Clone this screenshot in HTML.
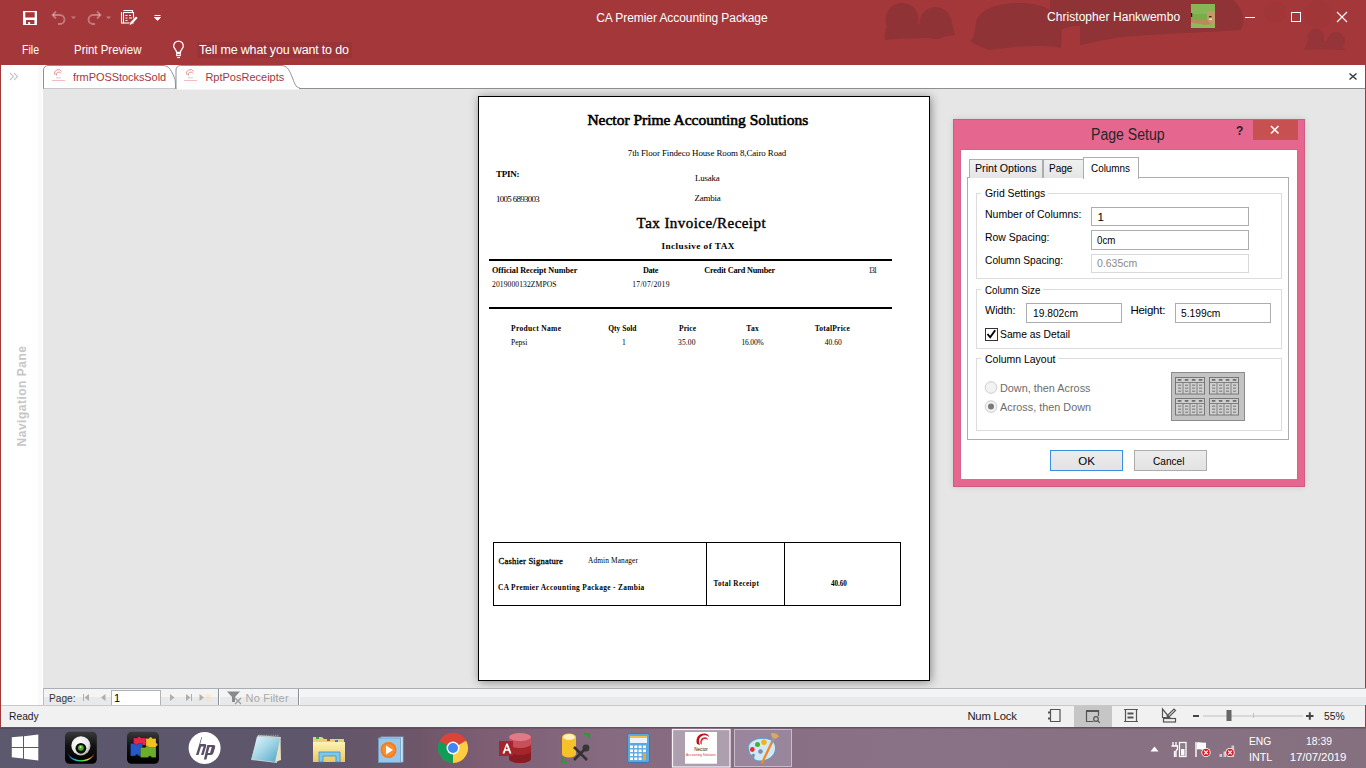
<!DOCTYPE html>
<html><head><meta charset="utf-8">
<style>
*{margin:0;padding:0;box-sizing:border-box}
html,body{width:1366px;height:768px;overflow:hidden;background:#e6e6e6;font-family:"Liberation Sans",sans-serif}
.a{position:absolute}
.t{position:absolute;white-space:nowrap;line-height:1}
svg{position:absolute;overflow:visible}
</style></head><body>
<div class="a" style="left:0;top:0;width:1366px;height:65px;background:#a4373a;overflow:hidden"><svg style="left:0;top:0" width="1366" height="65">
<g fill="#8f3337">
<circle cx="902" cy="19.5" r="16.5"/><circle cx="935.5" cy="23" r="16"/>
<path d="M886 28 C885 34 884 38 885.5 40 C905 37 930 40 955 35 L952 24 L892 24Z"/>
<path d="M976 22 C980 8 1000 3 1020 3 C1045 3 1060 12 1062 30 L1061 48 C1040 44 1010 47 990 50 C982 48 976 45 970 41 C974 38 975 32 976 22Z"/>
<path d="M1050 0 H1090 V26 C1075 24 1062 28 1058 32 L1050 10Z"/>
<path d="M1080 0 H1233 C1243 8 1246 22 1241 30 C1215 32 1170 33 1122 37 C1100 40 1088 44 1080 45Z"/>
</g><g fill="#953539"><circle cx="1316" cy="37" r="8.5"/><circle cx="1336" cy="41" r="9"/>
<path d="M1304 50 C1306 46 1307 42 1309 38 L1340 44 L1346 50 C1330 49 1315 49 1304 50Z"/>
</g>
<g fill="#a13639"><circle cx="1275" cy="12" r="11"/><circle cx="1318" cy="14" r="14"/></g>
</svg></div><div class="t" style="left:596.20px;top:12.00px;font-size:12px;font-family:'Liberation Sans',sans-serif;font-weight:normal;color:#fff;letter-spacing:-0.071px;">CA Premier Accounting Package</div>
<div class="t" style="left:1047.00px;top:11.00px;font-size:12px;font-family:'Liberation Sans',sans-serif;font-weight:normal;color:#fff;letter-spacing:0.050px;">Christopher Hankwembo</div>
<svg style="left:1191px;top:4px" width="24" height="24">
<rect width="24" height="24" fill="#79ad48"/>
<rect y="0" width="24" height="10" fill="#86b656"/>
<rect y="17" width="24" height="7" fill="#8cbc5a"/>
<path d="M0 16 C6 14.5 12 15 16 16 L22 20 L14 21 C8 20 3 19 0 18.5Z" fill="#b78b57"/>
<path d="M16 8 C17 6.5 22 6.5 24 8 V20 C21 21 17 19 16 15Z" fill="#c69a68"/>
<path d="M18 12 h2.5 v1.3 h-2.5z" fill="#3a2a20"/><path d="M18 14.5 h3 v1.3 h-3z" fill="#f0e8e0"/>
<path d="M0 9 h1.2 v4 h-1.2z" fill="#201510"/>
</svg><svg style="left:0;top:0" width="1366" height="35">
<line x1="1245" y1="17.5" x2="1255" y2="17.5" stroke="#fff" stroke-width="1"/>
<rect x="1291.5" y="12.5" width="9" height="9" fill="none" stroke="#fff" stroke-width="1"/>
<path d="M1337 12 L1347 22 M1347 12 L1337 22" stroke="#fff" stroke-width="1.1"/>
</svg><svg style="left:0;top:0" width="200" height="35">
<rect x="23" y="11" width="14" height="14" fill="#fff"/>
<rect x="25.3" y="12.2" width="9.4" height="5.3" fill="#a4373a"/>
<rect x="26" y="20" width="8.4" height="5" fill="#a4373a"/>
<rect x="28.2" y="22" width="1.9" height="3" fill="#fff"/>
<rect x="23" y="24" width="14" height="1" fill="#fff"/>
<g stroke="rgba(255,255,255,.35)" fill="none" stroke-width="1.8">
<path d="M53 15 h7 a4.5 4.5 0 0 1 0 9 h-2"/><path d="M56 11.5 l-3.5 3.5 l3.5 3.5"/>
<path d="M100 15 h-7 a4.5 4.5 0 0 0 0 9 h2"/><path d="M97 11.5 l3.5 3.5 l-3.5 3.5"/>
</g>
<path d="M71 16.5 h5 l-2.5 2.5z M106 16.5 h5 l-2.5 2.5z" fill="rgba(255,255,255,.35)"/>
<g stroke="#fff" fill="none" stroke-width="1.1">
<path d="M121.5 12 v11 h2 M123.5 10.5 h9 v2"/>
<rect x="123.5" y="12.5" width="10" height="10.5"/>
<path d="M125.5 15.5 h2 M125.5 18 h2 M125.5 20.5 h2 M129 15.5 h2 M129 18 h3"/>
</g>
<path d="M136 16 l2 2 l-6 6.5 l-3 1 l1 -3z" fill="#fff" stroke="#a4373a" stroke-width="0.8"/>
<path d="M154.5 15.5 h6 M154.5 17.5 h6 l-3 3z" stroke="#fff" fill="#fff" stroke-width="1"/>
</svg><div class="t" style="left:21.50px;top:44.00px;font-size:12.5px;font-family:'Liberation Sans',sans-serif;font-weight:normal;color:#fff;transform:scaleX(0.8500);transform-origin:0px 0;">File</div>
<div class="t" style="left:74.00px;top:44.00px;font-size:12.5px;font-family:'Liberation Sans',sans-serif;font-weight:normal;color:#fff;transform:scaleX(0.9160);transform-origin:0px 0;">Print Preview</div>
<div class="a" style="left:197px;top:42px;width:155px;height:16px;background:#993438"></div><div class="t" style="left:199.00px;top:44.00px;font-size:12.5px;font-family:'Liberation Sans',sans-serif;font-weight:normal;color:#fff;letter-spacing:-0.165px;">Tell me what you want to do</div>
<svg style="left:0;top:0" width="200" height="65">
<path d="M176.6 52.3 C176.2 49.8 173.7 48.3 173.7 45.9 A4.8 4.8 0 0 1 183.3 45.9 C183.3 48.3 180.8 49.8 180.4 52.3 Z" fill="none" stroke="#fff" stroke-width="1.3"/>
<rect x="176.7" y="53.6" width="3.6" height="2" fill="none" stroke="#fff" stroke-width="1.1"/>
<rect x="177.2" y="57" width="2.7" height="1.1" fill="#fff"/>
</svg><div class="a" style="left:0;top:65px;width:1366px;height:24px;background:#fff"></div><div class="a" style="left:43px;top:88px;width:1323px;height:1px;background:#8c9196"></div><div class="a" style="left:0;top:65px;width:43px;height:641px;background:#fff"></div><div class="a" style="left:38px;top:65px;width:4px;height:641px;background:#fafafa"></div><div class="a" style="left:0;top:0;width:1px;height:728px;background:#a4373a"></div><div class="a" style="left:1365px;top:65px;width:1px;height:663px;background:#a4373a"></div><svg style="left:0;top:0" width="45" height="90"><path d="M10 73 l3.5 3.5 l-3.5 3.5 M14 73 l3.5 3.5 l-3.5 3.5" fill="none" stroke="#c4c4c4" stroke-width="1.1"/></svg><div class="t" style="left:21.5px;top:395.5px;font-size:12px;font-weight:bold;color:#c6c6c6;transform:translate(-50%,-50%) rotate(-90deg);letter-spacing:0.5px">Navigation Pane</div><svg style="left:0;top:0" width="320" height="90">
<path d="M43.5 88.5 V70 a4.5 4.5 0 0 1 4.5 -4.5 H163 c6 0 8 5 10 9 c2 4 2.5 6 2.5 10 v4" fill="#fff" stroke="#8c9196" stroke-width="1"/>
<path d="M176 88.5 V70 a4.5 4.5 0 0 1 4.5 -4.5 H281 c6 0 8 4 10.5 10 c3 7 4 12.5 8.5 12.5" fill="#fff" stroke="#8c9196" stroke-width="1"/>
<rect x="177" y="88" width="122" height="1.5" fill="#fff"/>
</svg><div class="t" style="left:73.00px;top:72.00px;font-size:11px;font-family:'Liberation Sans',sans-serif;font-weight:normal;color:#a4373a;letter-spacing:-0.067px;">frmPOSStocksSold</div>
<div class="t" style="left:205.40px;top:72.00px;font-size:11px;font-family:'Liberation Sans',sans-serif;font-weight:normal;color:#a4373a;">RptPosReceipts</div>
<svg style="left:51px;top:68px" width="15" height="15">
<path d="M4 7 a3.5 3.5 0 0 1 6.5 -3.5 M5.5 7.5 a2.3 2.3 0 0 1 4.5 -2" fill="none" stroke="#d55" stroke-width="0.8" opacity=".8"/>
<rect x="5" y="9.5" width="5" height="0.7" fill="#bbb"/><rect x="1" y="12" width="13" height="0.7" fill="#f0a0a0"/>
</svg><svg style="left:183px;top:68px" width="15" height="15">
<path d="M4 7 a3.5 3.5 0 0 1 6.5 -3.5 M5.5 7.5 a2.3 2.3 0 0 1 4.5 -2" fill="none" stroke="#d55" stroke-width="0.8" opacity=".8"/>
<rect x="5" y="9.5" width="5" height="0.7" fill="#bbb"/><rect x="1" y="12" width="13" height="0.7" fill="#f0a0a0"/>
</svg><svg style="left:0;top:0" width="1366" height="90"><path d="M1349.5 73.5 L1356.5 79.5 M1356.5 73.5 L1349.5 79.5" stroke="#353b42" stroke-width="1.5"/></svg><div class="a" style="left:478px;top:96px;width:452px;height:585px;background:#fff;border:1px solid #000;box-shadow:1px 1px 9px rgba(0,0,0,.42)"></div><div class="t" style="left:587.40px;top:112.00px;font-size:15.5px;font-family:'Liberation Serif',serif;font-weight:normal;color:#000;-webkit-text-stroke:0.6px #000;">Nector Prime Accounting Solutions</div>
<div class="t" style="left:627.80px;top:149.00px;font-size:8.92px;font-family:'Liberation Serif',serif;font-weight:normal;color:#000;letter-spacing:-0.100px;">7th Floor Findeco House Room 8,Cairo Road</div>
<div class="t" style="left:496.00px;top:170.00px;font-size:9.02px;font-family:'Liberation Serif',serif;font-weight:bold;color:#000;letter-spacing:-0.250px;">TPIN:</div>
<div class="t" style="left:695.00px;top:174.00px;font-size:8.92px;font-family:'Liberation Serif',serif;font-weight:normal;color:#000;letter-spacing:-0.200px;">Lusaka</div>
<div class="t" style="left:496.00px;top:195.00px;font-size:8.92px;font-family:'Liberation Serif',serif;font-weight:normal;color:#000;letter-spacing:-0.673px;">1005 6893003</div>
<div class="t" style="left:694.60px;top:194.00px;font-size:8.92px;font-family:'Liberation Serif',serif;font-weight:normal;color:#000;letter-spacing:-0.200px;">Zambia</div>
<div class="t" style="left:636.60px;top:216.00px;font-size:15px;font-family:'Liberation Serif',serif;font-weight:normal;color:#000;letter-spacing:0.444px;-webkit-text-stroke:0.4px #000;">Tax Invoice/Receipt</div>
<div class="t" style="left:661.40px;top:242.00px;font-size:9.2px;font-family:'Liberation Serif',serif;font-weight:bold;color:#000;letter-spacing:0.467px;">Inclusive of TAX</div>
<div class="a" style="left:489px;top:259px;width:403px;height:2px;background:#000"></div><div class="a" style="left:489px;top:307px;width:403px;height:2px;background:#000"></div><div class="t" style="left:492.00px;top:267.00px;font-size:8.19px;font-family:'Liberation Serif',serif;font-weight:bold;color:#000;letter-spacing:-0.023px;">Official Receipt Number</div>
<div class="t" style="left:643.00px;top:267.00px;font-size:8.19px;font-family:'Liberation Serif',serif;font-weight:bold;color:#000;letter-spacing:-0.333px;">Date</div>
<div class="t" style="left:704.30px;top:267.00px;font-size:8.19px;font-family:'Liberation Serif',serif;font-weight:bold;color:#000;letter-spacing:-0.176px;">Credit Card Number</div>
<div class="t" style="left:868.40px;top:267.00px;font-size:7.64px;font-family:'Liberation Serif',serif;font-weight:normal;color:#000;letter-spacing:-1.200px;">131</div>
<div class="t" style="left:492.00px;top:281.00px;font-size:7.64px;font-family:'Liberation Serif',serif;font-weight:normal;color:#000;letter-spacing:0.071px;">2019000132ZMPOS</div>
<div class="t" style="left:632.20px;top:281.00px;font-size:7.64px;font-family:'Liberation Serif',serif;font-weight:normal;color:#000;letter-spacing:0.289px;">17/07/2019</div>
<div class="t" style="left:511.00px;top:325.00px;font-size:7.54px;font-family:'Liberation Serif',serif;font-weight:bold;color:#000;letter-spacing:0.318px;">Product Name</div>
<div class="t" style="left:608.20px;top:325.00px;font-size:7.54px;font-family:'Liberation Serif',serif;font-weight:bold;color:#000;">Qty Sold</div>
<div class="t" style="left:679.00px;top:325.00px;font-size:7.54px;font-family:'Liberation Serif',serif;font-weight:bold;color:#000;letter-spacing:0.075px;">Price</div>
<div class="t" style="left:746.20px;top:325.00px;font-size:7.54px;font-family:'Liberation Serif',serif;font-weight:bold;color:#000;letter-spacing:0.400px;">Tax</div>
<div class="t" style="left:814.70px;top:325.00px;font-size:7.54px;font-family:'Liberation Serif',serif;font-weight:bold;color:#000;letter-spacing:0.222px;">TotalPrice</div>
<div class="t" style="left:511.00px;top:339.00px;font-size:7.54px;font-family:'Liberation Serif',serif;font-weight:normal;color:#000;">Pepsi</div>
<div class="t" style="left:622.00px;top:339.00px;font-size:7.54px;font-family:'Liberation Serif',serif;font-weight:normal;color:#000;">1</div>
<div class="t" style="left:678.00px;top:339.00px;font-size:7.54px;font-family:'Liberation Serif',serif;font-weight:normal;color:#000;letter-spacing:0.150px;">35.00</div>
<div class="t" style="left:741.50px;top:339.00px;font-size:7.54px;font-family:'Liberation Serif',serif;font-weight:normal;color:#000;letter-spacing:-0.200px;">16.00%</div>
<div class="t" style="left:824.80px;top:339.00px;font-size:7.54px;font-family:'Liberation Serif',serif;font-weight:normal;color:#000;">40.60</div>
<div class="a" style="left:493px;top:542px;width:408px;height:64px;border:1px solid #000"></div><div class="a" style="left:706px;top:542px;width:1px;height:64px;background:#000"></div><div class="a" style="left:784px;top:542px;width:1px;height:64px;background:#000"></div><div class="t" style="left:498.50px;top:557.00px;font-size:8.6px;font-family:'Liberation Serif',serif;font-weight:normal;color:#000;letter-spacing:0.188px;-webkit-text-stroke:0.3px #000;">Cashier Signature</div>
<div class="t" style="left:588.00px;top:557.00px;font-size:7.36px;font-family:'Liberation Serif',serif;font-weight:normal;color:#000;letter-spacing:0.125px;">Admin Manager</div>
<div class="t" style="left:498.00px;top:584.00px;font-size:7.36px;font-family:'Liberation Serif',serif;font-weight:bold;color:#000;letter-spacing:0.341px;">CA Premier Accounting Package - Zambia</div>
<div class="t" style="left:713.50px;top:581.00px;font-size:7.18px;font-family:'Liberation Serif',serif;font-weight:bold;color:#000;letter-spacing:0.392px;">Total Receipt</div>
<div class="t" style="left:831.00px;top:581.00px;font-size:7.18px;font-family:'Liberation Serif',serif;font-weight:bold;color:#000;letter-spacing:-0.100px;">40.60</div>
<div class="a" style="left:953px;top:119px;width:352px;height:368px;background:#e5678f;border:1px solid #cf5a83;box-shadow:0 0 6px rgba(0,0,0,.12)"></div><div class="a" style="left:960px;top:149px;width:338px;height:330px;background:#fff;border:1px solid #d8628a;border-width:1px 1px 0 1px"></div><div class="a" style="left:1253px;top:120px;width:45px;height:20px;background:#c75050"></div><svg style="left:0;top:0" width="1366" height="200"><path d="M1271 126 l7.5 7.5 M1278.5 126 l-7.5 7.5" stroke="#fff" stroke-width="1.6"/></svg><div class="t" style="left:1236.00px;top:125.00px;font-size:12px;font-family:'Liberation Sans',sans-serif;font-weight:bold;color:#222;">?</div>
<div class="t" style="left:1091.30px;top:127.00px;font-size:16px;font-family:'Liberation Sans',sans-serif;font-weight:normal;color:#262626;transform:scaleX(0.8810);transform-origin:0px 0;">Page Setup</div>
<div class="a" style="left:967px;top:177px;width:322px;height:263px;background:#fff;border:1px solid #adadad"></div><div class="a" style="left:969px;top:159px;width:74px;height:19px;background:linear-gradient(#f0f0f0,#e5e5e5);border:1px solid #adadad;border-bottom:none"></div><div class="a" style="left:1043px;top:159px;width:41px;height:19px;background:linear-gradient(#f0f0f0,#e5e5e5);border:1px solid #adadad;border-bottom:none"></div><div class="a" style="left:1083px;top:157px;width:56px;height:22px;background:#fff;border:1px solid #adadad;border-bottom:none"></div><div class="t" style="left:974.50px;top:163.00px;font-size:11.5px;font-family:'Liberation Sans',sans-serif;font-weight:normal;color:#000;transform:scaleX(0.9254);transform-origin:0px 0;">Print Options</div>
<div class="t" style="left:1048.70px;top:163.00px;font-size:11.5px;font-family:'Liberation Sans',sans-serif;font-weight:normal;color:#000;transform:scaleX(0.8704);transform-origin:0px 0;">Page</div>
<div class="t" style="left:1090.80px;top:163.00px;font-size:11.5px;font-family:'Liberation Sans',sans-serif;font-weight:normal;color:#000;transform:scaleX(0.8609);transform-origin:0px 0;">Columns</div>
<div class="a" style="left:976px;top:193px;width:306px;height:86px;border:1px solid #dcdcdc"></div><div class="a" style="left:981px;top:187px;width:67px;height:12px;background:#fff"></div><div class="t" style="left:984.50px;top:188.00px;font-size:11.5px;font-family:'Liberation Sans',sans-serif;font-weight:normal;color:#000;transform:scaleX(0.9060);transform-origin:0px 0;">Grid Settings</div>
<div class="a" style="left:976px;top:289px;width:306px;height:60px;border:1px solid #dcdcdc"></div><div class="a" style="left:981px;top:283px;width:62px;height:12px;background:#fff"></div><div class="t" style="left:984.50px;top:285.00px;font-size:11.5px;font-family:'Liberation Sans',sans-serif;font-weight:normal;color:#000;transform:scaleX(0.8485);transform-origin:0px 0;">Column Size</div>
<div class="a" style="left:976px;top:358px;width:306px;height:73px;border:1px solid #dcdcdc"></div><div class="a" style="left:981px;top:352px;width:77px;height:12px;background:#fff"></div><div class="t" style="left:984.50px;top:354.00px;font-size:11.5px;font-family:'Liberation Sans',sans-serif;font-weight:normal;color:#000;transform:scaleX(0.9103);transform-origin:0px 0;">Column Layout</div>
<div class="t" style="left:984.50px;top:209.00px;font-size:11.5px;font-family:'Liberation Sans',sans-serif;font-weight:normal;color:#000;transform:scaleX(0.9143);transform-origin:0px 0;">Number of Columns:</div>
<div class="a" style="left:1091px;top:207px;width:158px;height:19px;background:#fff;border:1px solid #abadb3"></div><div class="t" style="left:1097.60px;top:212.00px;font-size:11.5px;font-family:'Liberation Sans',sans-serif;font-weight:normal;color:#000;">1</div>
<div class="t" style="left:984.50px;top:232.00px;font-size:11.5px;font-family:'Liberation Sans',sans-serif;font-weight:normal;color:#000;transform:scaleX(0.9085);transform-origin:0px 0;">Row Spacing:</div>
<div class="a" style="left:1091px;top:230px;width:158px;height:19.5px;background:#fff;border:1px solid #abadb3"></div><div class="t" style="left:1097.00px;top:235.00px;font-size:11.5px;font-family:'Liberation Sans',sans-serif;font-weight:normal;color:#000;transform:scaleX(0.8409);transform-origin:0px 0;">0cm</div>
<div class="t" style="left:984.50px;top:255.00px;font-size:11.5px;font-family:'Liberation Sans',sans-serif;font-weight:normal;color:#000;transform:scaleX(0.8920);transform-origin:0px 0;">Column Spacing:</div>
<div class="a" style="left:1091px;top:253.5px;width:158px;height:19px;background:#fff;border:1px solid #d9d9d9"></div><div class="t" style="left:1096.50px;top:258.00px;font-size:11.5px;font-family:'Liberation Sans',sans-serif;font-weight:normal;color:#8a8a8a;transform:scaleX(0.9111);transform-origin:0px 0;">0.635cm</div>
<div class="t" style="left:984.50px;top:305.00px;font-size:11.5px;font-family:'Liberation Sans',sans-serif;font-weight:normal;color:#000;transform:scaleX(0.9394);transform-origin:0px 0;">Width:</div>
<div class="a" style="left:1026px;top:303px;width:96px;height:20px;background:#fff;border:1px solid #abadb3"></div><div class="t" style="left:1032.80px;top:308.00px;font-size:11.5px;font-family:'Liberation Sans',sans-serif;font-weight:normal;color:#000;transform:scaleX(0.8902);transform-origin:0px 0;">19.802cm</div>
<div class="t" style="left:1130.40px;top:305.00px;font-size:11.5px;font-family:'Liberation Sans',sans-serif;font-weight:normal;color:#000;letter-spacing:-0.250px;">Height:</div>
<div class="a" style="left:1175px;top:303px;width:96px;height:20px;background:#fff;border:1px solid #abadb3"></div><div class="t" style="left:1180.80px;top:308.00px;font-size:11.5px;font-family:'Liberation Sans',sans-serif;font-weight:normal;color:#000;transform:scaleX(0.8933);transform-origin:0px 0;">5.199cm</div>
<div class="a" style="left:985px;top:328px;width:13px;height:13px;background:#fff;border:1px solid #333"></div><svg style="left:0;top:0" width="1366" height="500"><path d="M987.5 334 l2.7 3.3 l5 -7" fill="none" stroke="#000" stroke-width="1.9"/></svg><div class="t" style="left:1000.40px;top:329.00px;font-size:11.5px;font-family:'Liberation Sans',sans-serif;font-weight:normal;color:#000;transform:scaleX(0.8974);transform-origin:0px 0;">Same as Detail</div>
<svg style="left:0;top:0" width="1366" height="500">
<circle cx="991" cy="387.5" r="5.8" fill="#f2f2f2" stroke="#cdcdcd" stroke-width="1"/>
<circle cx="991" cy="406.6" r="5.8" fill="#f2f2f2" stroke="#cdcdcd" stroke-width="1"/>
<circle cx="991" cy="406.6" r="3" fill="#7a7a7a"/>
</svg><div class="t" style="left:1000.40px;top:383.00px;font-size:11.5px;font-family:'Liberation Sans',sans-serif;font-weight:normal;color:#6d6d6d;transform:scaleX(0.9437);transform-origin:0px 0;">Down, then Across</div>
<div class="t" style="left:1000.40px;top:402.00px;font-size:11.5px;font-family:'Liberation Sans',sans-serif;font-weight:normal;color:#6d6d6d;transform:scaleX(0.9437);transform-origin:0px 0;">Across, then Down</div>
<svg style="left:0;top:0" width="1366" height="500"><rect x="1171.5" y="372.5" width="73" height="48" fill="#c3c3c3" stroke="#8c8c8c"/><rect x="1175.5" y="377.5" width="29" height="16.5" fill="#d0d0d0" stroke="#767676" stroke-width="1"/><path d="M1175 382.5 h30 M1183 382.5 v11.5 M1190 382.5 v11.5 M1197 382.5 v11.5" stroke="#767676" stroke-width="0.9"/><rect x="1177.8" y="379" width="3.6" height="1.8" fill="#707070"/><rect x="1178" y="384.6" width="3.2" height="1.1" fill="#7a7a7a"/><rect x="1178" y="387.6" width="3.2" height="1.1" fill="#7a7a7a"/><rect x="1178" y="390.6" width="3.2" height="1.1" fill="#7a7a7a"/><rect x="1184.8" y="379" width="3.6" height="1.8" fill="#707070"/><rect x="1185" y="384.6" width="3.2" height="1.1" fill="#7a7a7a"/><rect x="1185" y="387.6" width="3.2" height="1.1" fill="#7a7a7a"/><rect x="1185" y="390.6" width="3.2" height="1.1" fill="#7a7a7a"/><rect x="1191.8" y="379" width="3.6" height="1.8" fill="#707070"/><rect x="1192" y="384.6" width="3.2" height="1.1" fill="#7a7a7a"/><rect x="1192" y="387.6" width="3.2" height="1.1" fill="#7a7a7a"/><rect x="1192" y="390.6" width="3.2" height="1.1" fill="#7a7a7a"/><rect x="1198.8" y="379" width="3.6" height="1.8" fill="#707070"/><rect x="1199" y="384.6" width="3.2" height="1.1" fill="#7a7a7a"/><rect x="1199" y="387.6" width="3.2" height="1.1" fill="#7a7a7a"/><rect x="1199" y="390.6" width="3.2" height="1.1" fill="#7a7a7a"/><rect x="1209.5" y="377.5" width="29" height="16.5" fill="#d0d0d0" stroke="#767676" stroke-width="1"/><path d="M1209 382.5 h30 M1217 382.5 v11.5 M1224 382.5 v11.5 M1231 382.5 v11.5" stroke="#767676" stroke-width="0.9"/><rect x="1211.8" y="379" width="3.6" height="1.8" fill="#707070"/><rect x="1212" y="384.6" width="3.2" height="1.1" fill="#7a7a7a"/><rect x="1212" y="387.6" width="3.2" height="1.1" fill="#7a7a7a"/><rect x="1212" y="390.6" width="3.2" height="1.1" fill="#7a7a7a"/><rect x="1218.8" y="379" width="3.6" height="1.8" fill="#707070"/><rect x="1219" y="384.6" width="3.2" height="1.1" fill="#7a7a7a"/><rect x="1219" y="387.6" width="3.2" height="1.1" fill="#7a7a7a"/><rect x="1219" y="390.6" width="3.2" height="1.1" fill="#7a7a7a"/><rect x="1225.8" y="379" width="3.6" height="1.8" fill="#707070"/><rect x="1226" y="384.6" width="3.2" height="1.1" fill="#7a7a7a"/><rect x="1226" y="387.6" width="3.2" height="1.1" fill="#7a7a7a"/><rect x="1226" y="390.6" width="3.2" height="1.1" fill="#7a7a7a"/><rect x="1232.8" y="379" width="3.6" height="1.8" fill="#707070"/><rect x="1233" y="384.6" width="3.2" height="1.1" fill="#7a7a7a"/><rect x="1233" y="387.6" width="3.2" height="1.1" fill="#7a7a7a"/><rect x="1233" y="390.6" width="3.2" height="1.1" fill="#7a7a7a"/><rect x="1175.5" y="398.5" width="29" height="16.5" fill="#d0d0d0" stroke="#767676" stroke-width="1"/><path d="M1175 403.5 h30 M1183 403.5 v11.5 M1190 403.5 v11.5 M1197 403.5 v11.5" stroke="#767676" stroke-width="0.9"/><rect x="1177.8" y="400" width="3.6" height="1.8" fill="#707070"/><rect x="1178" y="405.6" width="3.2" height="1.1" fill="#7a7a7a"/><rect x="1178" y="408.6" width="3.2" height="1.1" fill="#7a7a7a"/><rect x="1178" y="411.6" width="3.2" height="1.1" fill="#7a7a7a"/><rect x="1184.8" y="400" width="3.6" height="1.8" fill="#707070"/><rect x="1185" y="405.6" width="3.2" height="1.1" fill="#7a7a7a"/><rect x="1185" y="408.6" width="3.2" height="1.1" fill="#7a7a7a"/><rect x="1185" y="411.6" width="3.2" height="1.1" fill="#7a7a7a"/><rect x="1191.8" y="400" width="3.6" height="1.8" fill="#707070"/><rect x="1192" y="405.6" width="3.2" height="1.1" fill="#7a7a7a"/><rect x="1192" y="408.6" width="3.2" height="1.1" fill="#7a7a7a"/><rect x="1192" y="411.6" width="3.2" height="1.1" fill="#7a7a7a"/><rect x="1198.8" y="400" width="3.6" height="1.8" fill="#707070"/><rect x="1199" y="405.6" width="3.2" height="1.1" fill="#7a7a7a"/><rect x="1199" y="408.6" width="3.2" height="1.1" fill="#7a7a7a"/><rect x="1199" y="411.6" width="3.2" height="1.1" fill="#7a7a7a"/><rect x="1209.5" y="398.5" width="29" height="16.5" fill="#d0d0d0" stroke="#767676" stroke-width="1"/><path d="M1209 403.5 h30 M1217 403.5 v11.5 M1224 403.5 v11.5 M1231 403.5 v11.5" stroke="#767676" stroke-width="0.9"/><rect x="1211.8" y="400" width="3.6" height="1.8" fill="#707070"/><rect x="1212" y="405.6" width="3.2" height="1.1" fill="#7a7a7a"/><rect x="1212" y="408.6" width="3.2" height="1.1" fill="#7a7a7a"/><rect x="1212" y="411.6" width="3.2" height="1.1" fill="#7a7a7a"/><rect x="1218.8" y="400" width="3.6" height="1.8" fill="#707070"/><rect x="1219" y="405.6" width="3.2" height="1.1" fill="#7a7a7a"/><rect x="1219" y="408.6" width="3.2" height="1.1" fill="#7a7a7a"/><rect x="1219" y="411.6" width="3.2" height="1.1" fill="#7a7a7a"/><rect x="1225.8" y="400" width="3.6" height="1.8" fill="#707070"/><rect x="1226" y="405.6" width="3.2" height="1.1" fill="#7a7a7a"/><rect x="1226" y="408.6" width="3.2" height="1.1" fill="#7a7a7a"/><rect x="1226" y="411.6" width="3.2" height="1.1" fill="#7a7a7a"/><rect x="1232.8" y="400" width="3.6" height="1.8" fill="#707070"/><rect x="1233" y="405.6" width="3.2" height="1.1" fill="#7a7a7a"/><rect x="1233" y="408.6" width="3.2" height="1.1" fill="#7a7a7a"/><rect x="1233" y="411.6" width="3.2" height="1.1" fill="#7a7a7a"/></svg><div class="a" style="left:1050px;top:450px;width:73px;height:21px;background:linear-gradient(#ececec,#e3e3e3);border:1px solid #3c8ee0"></div><div class="t" style="left:1078.20px;top:456.00px;font-size:11.5px;font-family:'Liberation Sans',sans-serif;font-weight:normal;color:#000;">OK</div>
<div class="a" style="left:1134px;top:450px;width:73px;height:21px;background:linear-gradient(#ececec,#e3e3e3);border:1px solid #acacac"></div><div class="t" style="left:1153.40px;top:456.00px;font-size:11.5px;font-family:'Liberation Sans',sans-serif;font-weight:normal;color:#000;transform:scaleX(0.8778);transform-origin:0px 0;">Cancel</div>
<div class="a" style="left:43px;top:688px;width:1323px;height:17px;background:linear-gradient(#f4f4f5 0,#f4f4f5 50%,#e8e9eb 50%,#e8e9eb 100%);border-top:1px solid #a9afb7;border-left:1px solid #b8bcc2"></div><div class="a" style="left:111px;top:690px;width:50px;height:15px;background:#fff;border:1px solid #b3b3b3;border-bottom:none"></div><div class="t" style="left:48.60px;top:693.00px;font-size:11px;font-family:'Liberation Sans',sans-serif;font-weight:normal;color:#333;transform:scaleX(0.9207);transform-origin:0px 0;">Page:</div>
<div class="t" style="left:114.00px;top:693.00px;font-size:11px;font-family:'Liberation Sans',sans-serif;font-weight:normal;color:#000;">1</div>
<svg style="left:0;top:0" width="1366" height="768">
<g fill="#aeaeae"><rect x="83" y="694" width="1" height="7"/><path d="M89 694 v7 l-4.5 -3.5z"/>
<path d="M105.5 694 v7 l-4.5 -3.5z"/>
<path d="M170 694 v7 l4.5 -3.5z"/>
<path d="M186 694 v7 l4.5 -3.5z"/><rect x="191" y="694" width="1" height="7"/>
<path d="M199.5 694 v7 l4.5 -3.5z"/></g>
<g stroke="#f3e2c2" stroke-width="1"><path d="M208 693.5 v8 M204 697.5 h8 M205 694.5 l6 6 M211 694.5 l-6 6"/></g>
<rect x="218" y="689" width="1" height="16" fill="#8c9196"/><rect x="219" y="689" width="1" height="16" fill="#fff"/>
<rect x="298" y="689" width="1" height="16" fill="#8c9196"/><rect x="299" y="689" width="1" height="16" fill="#fff"/>
<path d="M227 691.5 h13 l-5 5.5 v5 h-3 v-5z" fill="#8a8a8a"/>
<path d="M235 698 l6 6 M241 698 l-6 6" stroke="#9a9a9a" stroke-width="1.2"/>
</svg><div class="t" style="left:245.60px;top:693.00px;font-size:11px;font-family:'Liberation Sans',sans-serif;font-weight:normal;color:#aaaaaa;letter-spacing:0.175px;">No Filter</div>
<div class="a" style="left:0;top:705px;width:1366px;height:22px;background:#f1f1f1;border-top:1px solid #c9c9c9"></div><div class="a" style="left:0;top:727px;width:1366px;height:1px;background:#a4373a"></div><div class="a" style="left:0;top:705px;width:1px;height:23px;background:#a4373a"></div><div class="a" style="left:1365px;top:705px;width:1px;height:23px;background:#a4373a"></div><div class="t" style="left:8.60px;top:711.00px;font-size:11.3px;font-family:'Liberation Sans',sans-serif;font-weight:normal;color:#222;transform:scaleX(0.9091);transform-origin:0px 0;">Ready</div>
<div class="t" style="left:967.40px;top:711.00px;font-size:11.3px;font-family:'Liberation Sans',sans-serif;font-weight:normal;color:#222;letter-spacing:-0.200px;">Num Lock</div>
<div class="a" style="left:1074px;top:706px;width:38px;height:21px;background:#c6c6c6"></div><svg style="left:0;top:0" width="1366" height="768">
<g fill="none" stroke="#555" stroke-width="1.2">
<path d="M1050.5 709.5 h9.5 v12 h-9.5z"/><path d="M1048 712.5 h3 M1048 718.5 h3" stroke-width="2"/>
<path d="M1086.5 711 h12 v5 M1086.5 711 v10.5 h7"/><rect x="1086" y="710" width="13" height="2" fill="#555" stroke="none"/>
<circle cx="1096" cy="719" r="2.3"/><path d="M1097.8 720.8 l2 2"/>
<path d="M1125.5 709.5 v12 M1136.5 709.5 v12 M1124 709.5 h14 M1124 721.5 h14"/>
<rect x="1127.5" y="712.5" width="6" height="2" fill="#555" stroke="none"/><rect x="1127.5" y="716.5" width="6" height="2" fill="#555" stroke="none"/>
<path d="M1162.5 709 v8.5 h7 z"/><path d="M1167 716 l7 -7 l1.5 1.5 l-7 7z"/>
<rect x="1163.5" y="718.5" width="12" height="3.5"/>
</g>
<rect x="1193" y="715" width="6" height="2" fill="#444"/>
<rect x="1203" y="715.5" width="100" height="1" fill="#c2c2c2"/>
<rect x="1253" y="713" width="1" height="5" fill="#c2c2c2"/>
<rect x="1226.5" y="710" width="5" height="11" fill="#666"/>
<path d="M1306 715 h7.5 v2 h-7.5z M1308.8 712.3 h2 v7.5 h-2z" fill="#444"/>
</svg><div class="t" style="left:1324.00px;top:711.00px;font-size:11.3px;font-family:'Liberation Sans',sans-serif;font-weight:normal;color:#222;transform:scaleX(0.9130);transform-origin:0px 0;">55%</div>
<div class="a" style="left:0;top:728px;width:1366px;height:40px;background:linear-gradient(90deg,#5c586e 0%,#5e566b 22%,#6e5669 30.7%,#7c5d72 35%,#866a80 44%,#8a7286 66%,#85707f 100%)"></div><div class="a" style="left:0;top:728px;width:1366px;height:1px;background:rgba(40,0,20,.15)"></div><div class="t" style="left:1249.20px;top:736.00px;font-size:11.5px;font-family:'Liberation Sans',sans-serif;font-weight:normal;color:#fff;transform:scaleX(0.8960);transform-origin:0px 0;">ENG</div>
<div class="t" style="left:1248.80px;top:752.00px;font-size:11.5px;font-family:'Liberation Sans',sans-serif;font-weight:normal;color:#fff;transform:scaleX(0.9308);transform-origin:0px 0;">INTL</div>
<div class="t" style="left:1305.80px;top:736.00px;font-size:11.5px;font-family:'Liberation Sans',sans-serif;font-weight:normal;color:#fff;transform:scaleX(0.9034);transform-origin:0px 0;">18:39</div>
<div class="t" style="left:1289.80px;top:752.00px;font-size:11.5px;font-family:'Liberation Sans',sans-serif;font-weight:normal;color:#fff;letter-spacing:-0.111px;">17/07/2019</div>
<svg style="left:0;top:0" width="1366" height="768"><path d="M11.8 737.3 L23 736.3 V747 H11.8Z M24 736.2 L38.3 734.5 V747 H24Z M11.8 748 H23 V758.6 L11.8 757.3Z M24 748 H38.3 V760.4 L24 758.7Z" fill="#fff"/><defs><linearGradient id="gk" x1="0" y1="0" x2="0" y2="1"><stop offset="0" stop-color="#3a3a3a"/><stop offset=".45" stop-color="#111"/><stop offset="1" stop-color="#000"/></linearGradient>
<linearGradient id="rb" x1="0" y1="0" x2="1" y2="0"><stop offset="0" stop-color="#2050e0"/><stop offset=".3" stop-color="#20c0e0"/><stop offset=".5" stop-color="#30d040"/><stop offset=".75" stop-color="#f0e020"/><stop offset="1" stop-color="#f03020"/></linearGradient>
<radialGradient id="ball" cx=".4" cy=".35" r=".7"><stop offset="0" stop-color="#fff"/><stop offset=".7" stop-color="#e8e8e8"/><stop offset="1" stop-color="#a0a0a0"/></radialGradient></defs>
<rect x="65" y="731.7" width="31.8" height="32" rx="4.5" fill="url(#gk)"/>
<path d="M67.5 752 C70 762 90 763 94.5 753 C93 759 87 761.5 80.5 761.5 C73 761.5 69 758 67.5 752Z" fill="url(#rb)"/>
<path d="M68 752.5 C72 758.5 89 759 94 753 C90 757.5 73 758 68 752.5Z" fill="#000" opacity=".6"/>
<circle cx="80.9" cy="745.8" r="9.6" fill="url(#ball)"/>
<circle cx="80.9" cy="748.3" r="5.4" fill="#0c0c0c"/><circle cx="80.9" cy="747.8" r="2.9" fill="#4fae32"/><circle cx="80.5" cy="747" r="1" fill="#b8ff90"/><rect x="127" y="731.7" width="32" height="32" rx="4.5" fill="url(#gk)"/>
<g stroke="rgba(0,0,0,.35)" stroke-width=".5">
<path d="M133.5 738 h4 a1.6 1.6 0 0 1 3.2 0 h5.5 v4 a1.6 1.6 0 0 1 0 3.2 h-12.7z" fill="#e3284a"/>
<path d="M146 738.5 h3 a1.6 1.6 0 0 1 3.2 0 h3.8 v4.5 a1.6 1.6 0 0 1 0 3.2 v4.3 h-10z" fill="#f2c022"/>
<path d="M130.5 743.5 h4.5 a1.6 1.6 0 0 0 3.2 0 h4.3 v4.5 a1.6 1.6 0 0 1 0 3.2 v4.8 h-4 a1.6 1.6 0 0 0 -3.2 0 h-4.8z" fill="#2458c8"/>
<path d="M140.5 747.5 h5 a1.6 1.6 0 0 1 3.2 0 h7.3 v10 h-4.5 a1.6 1.6 0 0 0 -3.2 0 h-7.8z" fill="#6cae28"/>
</g><circle cx="204.6" cy="748" r="16" fill="#fff"/>
<path d="M201.5 737 l-5.5 18 h2.5 l2.6 -8.5 h2.5 l-2.6 8.5 h2.5 l2.7 -9 c.4 -1.6 -0.4 -2 -1.8 -2 h-4.2 l1.9 -7z M207.3 745 l-3.4 14.5 h2.5 l1.2 -4.5 h3 c1.6 0 2.4 -.8 2.8 -2 l1.7 -5.6 c.4 -1.6 -.3 -2.4 -1.8 -2.4z M209.6 747 h2.2 l-1.8 6 h-2.2z" fill="#5a4f68"/><defs><linearGradient id="np" x1="0" y1="0" x2="1" y2="1"><stop offset="0" stop-color="#e9f7fb"/><stop offset=".5" stop-color="#9fd4e6"/><stop offset="1" stop-color="#4ea6c8"/></linearGradient></defs>
<path d="M258 735 L281 737 L277 763 L251 760Z" fill="#c8ced2"/>
<path d="M257 736.5 L279.5 738.5 L276 762 L251.5 759Z" fill="url(#np)"/>
<path d="M259 735.5 h20" stroke="#9aa" stroke-width="1.5" stroke-dasharray="1 1.3"/>
<path d="M275 762 L280.5 739 L281 760Z" fill="#e8e2c0"/><defs><linearGradient id="fd" x1="0" y1="0" x2="0" y2="1"><stop offset="0" stop-color="#fff2b8"/><stop offset="1" stop-color="#e8c765"/></linearGradient></defs>
<path d="M313 737 h9 l2 2 h20 v23 h-31z" fill="#e9cf7a"/>
<rect x="316" y="737" width="3" height="2" fill="#2eaa3a"/><rect x="327" y="739" width="3" height="2" fill="#d23a2a"/><rect x="335" y="740" width="3" height="2" fill="#2a8ad2"/>
<path d="M313 742 h32 v20 h-32z" fill="url(#fd)"/>
<path d="M319 752 h21 v10 h-4 v-6 h-13 v6 h-4z" fill="#7cc8ee" stroke="#3a90c8" stroke-width=".8"/><rect x="381" y="737" width="22" height="25" fill="#cfe3f2" stroke="#8fb3d2" stroke-width=".8"/>
<rect x="378.5" y="738" width="22" height="24.5" fill="#9ac6e8" stroke="#6a9cc8" stroke-width=".8"/>
<circle cx="388.5" cy="750" r="8" fill="#f47b20"/><circle cx="388.5" cy="750" r="6.3" fill="#fc8b2a"/>
<path d="M386 745.5 v9 l7 -4.5z" fill="#fff"/><circle cx="453" cy="748" r="15" fill="#db4437"/>
<path d="M453 748 L440 755.5 A15 15 0 0 1 439.6 740.9 Z" fill="#0f9d58"/>
<path d="M453 748 L440 755.5 A15 15 0 0 0 453 763 Z" fill="#0f9d58"/>
<path d="M453 748 L466 740.5 A15 15 0 0 1 453 763 Z" fill="#ffcd40"/>
<path d="M453 748 L439.6 740.9 A15 15 0 0 1 466 740.5Z" fill="#db4437"/>
<circle cx="453" cy="748" r="6.5" fill="#fff"/><circle cx="453" cy="748" r="5" fill="#4285f4"/><path d="M509 737 a11 4 0 0 1 22 0 v22 a11 4 0 0 1 -22 0z" fill="#a4262c"/>
<path d="M509 737 a11 4 0 0 1 22 0 v7 a11 4 0 0 1 -22 0z" fill="#c8505a"/>
<ellipse cx="520" cy="737" rx="11" ry="4" fill="#e07a88"/>
<path d="M509 751 a11 4 0 0 0 22 0 v8 a11 4 0 0 1 -22 0z" fill="#8a1b22"/>
<rect x="499" y="741" width="14" height="15" fill="#a4262c"/>
<path d="M502.5 753.5 l3.8 -10 h1.4 l3.8 10 h-2 l-1 -2.8 h-3 l-1 2.8z M505.7 749.2 h2.2 l-1.1 -3.3z" fill="#fff"/><path d="M562 737 a7 3.5 0 0 1 14 0 v17 a7 3.5 0 0 1 -14 0z" fill="#f5c229"/>
<ellipse cx="569" cy="737" rx="6" ry="3" fill="#fdf0c0"/>
<path d="M584 734 h5 v5 M562 757 v5 h5" fill="none" stroke="#2a9a3a" stroke-width="1.8"/>
<path d="M574 747 l13 13 M587 747 l-13 13" stroke="#333" stroke-width="2.6"/>
<circle cx="586" cy="748" r="2.5" fill="none" stroke="#333" stroke-width="1.8"/><rect x="627.5" y="733.5" width="22" height="29" rx="2" fill="#5aa8e0" stroke="#3a78b8"/>
<rect x="630" y="736" width="17" height="7" fill="#e8f4fc"/><rect x="630" y="736" width="17" height="2" fill="#f5c04a"/>
<g fill="#fff"><rect x="630.0" y="745.5" width="3" height="2.6"/><rect x="630.0" y="749.5" width="3" height="2.6"/><rect x="630.0" y="753.5" width="3" height="2.6"/><rect x="630.0" y="757.5" width="3" height="2.6"/><rect x="634.3" y="745.5" width="3" height="2.6"/><rect x="634.3" y="749.5" width="3" height="2.6"/><rect x="634.3" y="753.5" width="3" height="2.6"/><rect x="634.3" y="757.5" width="3" height="2.6"/><rect x="638.6" y="745.5" width="3" height="2.6"/><rect x="638.6" y="749.5" width="3" height="2.6"/><rect x="638.6" y="753.5" width="3" height="2.6"/><rect x="638.6" y="757.5" width="3" height="2.6"/><rect x="642.9" y="745.5" width="3" height="2.6"/><rect x="642.9" y="749.5" width="3" height="2.6"/><rect x="642.9" y="753.5" width="3" height="2.6"/><rect x="642.9" y="757.5" width="3" height="2.6"/></g>
<rect x="643" y="753" width="3" height="7" fill="#f5a030"/><rect x="672.5" y="729.5" width="57.5" height="37.5" fill="#ad9fae" stroke="#f4f0f4" stroke-width="1.3"/>
<rect x="685" y="732" width="32" height="31.7" fill="#fff"/>
<path d="M697 744 C695 738 699 733 705 733.5 C708 734 709 736 709 737 C707 735 703 734.5 700.5 737 C698.5 739 698.5 742 700 745Z" fill="#c0101a"/>
<path d="M700.5 744 C699.5 740 702 737 705 737.3 C707 737.5 708 739 708 740 C706.5 738.8 704 738.6 702.5 740.3 C701.5 741.5 701.5 743 702 744.5Z" fill="#d03038"/>
<text x="701" y="751.3" font-family="Liberation Sans" font-size="4.6" fill="#111" text-anchor="middle">Nector</text>
<text x="701" y="756.3" font-family="Liberation Sans" font-size="3.2" fill="#e03040" text-anchor="middle">Accounting Solutions</text>
<rect x="734.5" y="729.5" width="57" height="37" fill="#9a869c" stroke="#c9b9c9" stroke-width="1"/>
<path d="M749 751 C746 745 752 738.5 762 738.3 C771 738 776 742 775.5 749 C775 756 768 761 760 761 C755 761 753 759 754 756.5 C755 754.5 754 753.5 752.5 754.5 C750.5 756 749.5 754 749 751Z" fill="#d2e8f6" stroke="#4a98c8" stroke-width=".9"/>
<circle cx="752.3" cy="749.5" r="2.4" fill="#e8302a"/><circle cx="757.5" cy="744.6" r="2.5" fill="#48b030"/><circle cx="764" cy="742.2" r="2.7" fill="#f5b020"/>
<circle cx="760.5" cy="751.5" r="1.9" fill="#9a869c" stroke="#4a98c8" stroke-width=".8"/>
<path d="M762 763 L772 742" stroke="#f08a20" stroke-width="2.3" stroke-linecap="round"/>
<path d="M771.5 743 L774 737" stroke="#999" stroke-width="2"/>
<path d="M772 737 L771 733.5 C773 732.5 777 733 779 736.5 L775 739Z" fill="#d8a868"/><path d="M1150.5 751.6 l4 -5 l4 5z" fill="#fff"/>
<g fill="none" stroke="#fff" stroke-width="1.3"><path d="M1173 742 v4 M1176 742 v4 M1171.5 746 h6 v3 l-1.5 2 v6 M1174.5 751 v6"/>
<rect x="1179.5" y="742.5" width="6.5" height="14"/></g><rect x="1181" y="749" width="3.5" height="6.5" fill="#fff"/><rect x="1181" y="744.5" width="3.5" height="4" fill="#888"/>
<path d="M1196 742 v15" stroke="#fff" stroke-width="1.4"/><path d="M1197 742.5 c3 -1 6 1 9 0 v7 c-3 1 -6 -1 -9 0z" fill="#fff"/>
<path d="M1219.5 757 h2.6 v-3 h-2.6z M1223.5 757 h2.6 v-5.5 h-2.6z M1227.5 757 h2.6 v-8.5 h-2.6z M1231.5 757 h2.6 v-11.5 h-2.6z" fill="#cfc6cf"/><circle cx="1206" cy="752.5" r="4.6" fill="#fff"/><circle cx="1206" cy="752.5" r="3.8" fill="#d8202a"/><path d="M1204.2 750.7 l3.6 3.6 M1207.8 750.7 l-3.6 3.6" stroke="#fff" stroke-width="1.2"/><circle cx="1230" cy="752.5" r="4.6" fill="#fff"/><circle cx="1230" cy="752.5" r="3.8" fill="#d8202a"/><path d="M1228.2 750.7 l3.6 3.6 M1231.8 750.7 l-3.6 3.6" stroke="#fff" stroke-width="1.2"/></svg></body></html>
